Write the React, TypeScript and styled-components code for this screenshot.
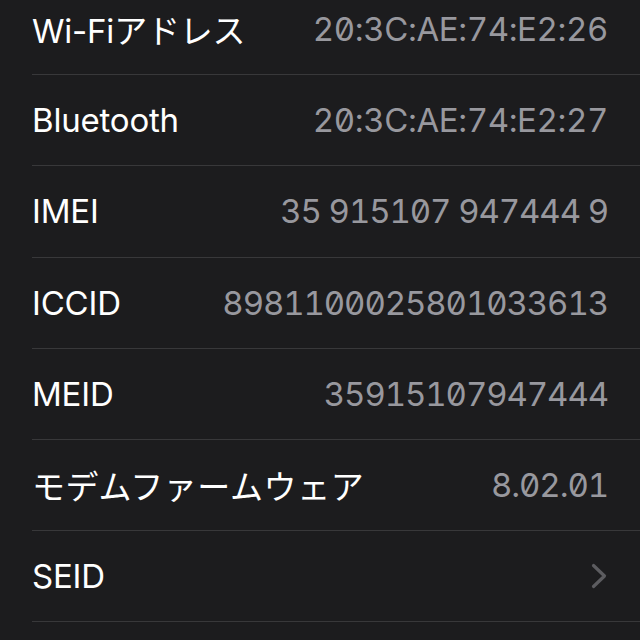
import styled, { createGlobalStyle } from "styled-components";

const GlobalStyle = createGlobalStyle`
  html, body {
    margin: 0;
    padding: 0;
    background: #1c1c1e;
  }
  body {
    font-family: Inter, "Noto Sans CJK JP", sans-serif;
    -webkit-font-smoothing: antialiased;
  }
`;

const Screen = styled.div`
  width: 640px;
  height: 640px;
  overflow: hidden;
  background: #1c1c1e;
`;

const List = styled.div`
  margin-top: -16px;
`;

const Row = styled.div`
  box-sizing: border-box;
  height: 91.2px;
  margin-left: 32px;
  padding-right: 32px;
  display: flex;
  align-items: center;
  justify-content: space-between;
  border-bottom: 1px solid #38383a;
`;

const Label = styled.span<{ $cjk?: boolean }>`
  color: #ffffff;
  font-size: 33px;
  letter-spacing: ${(p) => (p.$cjk ? "0.6px" : "-0.2px")};
  white-space: nowrap;
`;

const Value = styled.span<{ $mac?: boolean }>`
  color: #98989e;
  font-size: 33px;
  letter-spacing: ${(p) => (p.$mac ? "-0.4px" : "-1.1px")};
  font-feature-settings: "tnum" 1, "zero" 1;
  white-space: nowrap;
`;

const Chevron = styled.svg`
  width: 16px;
  height: 26px;
  margin-right: 1px;
  display: block;
`;

const rows = [
  { label: "Wi-Fiアドレス", value: "20:3C:AE:74:E2:26", mac: true },
  { label: "Bluetooth", value: "20:3C:AE:74:E2:27", mac: true },
  { label: "IMEI", value: "35 915107 947444 9" },
  { label: "ICCID", value: "8981100025801033613" },
  { label: "MEID", value: "35915107947444" },
  { label: "モデムファームウェア", value: "8.02.01", cjk: true },
];

const App = () => {
  return (
    <Screen>
      <GlobalStyle />
      <List>
        {rows.map((r) => (
          <Row key={r.label}>
            <Label $cjk={r.cjk}>{r.label}</Label>
            <Value $mac={r.mac}>{r.value}</Value>
          </Row>
        ))}
        <Row>
          <Label>SEID</Label>
          <Chevron viewBox="0 0 16 26">
            <path
              d="M2.5 2.5 L13.5 13 L2.5 23.5"
              fill="none"
              stroke="#5c5c60"
              strokeWidth="3.2"
              strokeLinecap="round"
              strokeLinejoin="round"
            />
          </Chevron>
        </Row>
      </List>
    </Screen>
  );
};

export default App;
